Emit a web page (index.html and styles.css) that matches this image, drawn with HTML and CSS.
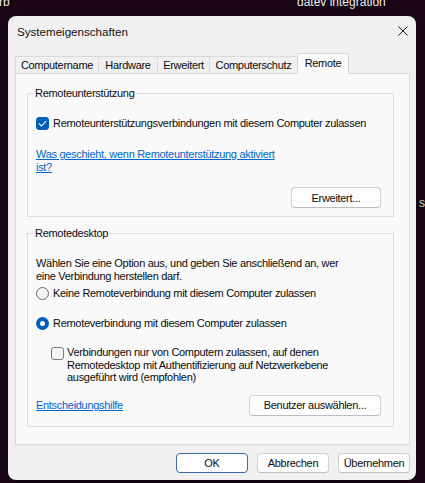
FILE: index.html
```html
<!DOCTYPE html>
<html lang="de">
<head>
<meta charset="utf-8">
<title>Systemeigenschaften</title>
<link rel="stylesheet" href="styles.css">
</head>
<body>
<div class="desk-label desk-rb">rb</div>
<div class="desk-label desk-datev">datev integration</div>
<div class="desk-label desk-ss">ss</div>

<div class="dialog">
  <div class="titlebar">
    <span class="title">Systemeigenschaften</span>
    <svg class="close" width="10" height="10" viewBox="0 0 10 10"><path d="M0.5 0.5 L9.5 9.5 M9.5 0.5 L0.5 9.5" stroke="#1b1b1b" stroke-width="1" fill="none"/></svg>
  </div>

  <div class="tabs">
    <div class="tab t1">Computername</div>
    <div class="tab t2">Hardware</div>
    <div class="tab t3">Erweitert</div>
    <div class="tab t4">Computerschutz</div>
    <div class="tab t5 active">Remote</div>
  </div>

  <div class="panel">
    <fieldset class="group g1">
      <legend>Remoteunterstützung</legend>
      <div class="option opt-assist">
        <span class="check checked"><svg width="13" height="13" viewBox="0 0 13 13"><path d="M3.3 6.9 L5.5 9 L9.7 4.4" stroke="#fff" stroke-width="1.1" fill="none" stroke-linecap="round" stroke-linejoin="round"/></svg></span>
        <span class="label">Remoteunterstützungsverbindungen mit diesem Computer zulassen</span>
      </div>
      <a class="link link-assist" href="#">Was geschieht, wenn Remoteunterstützung aktiviert<br>ist?</a>
      <div class="btn-row">
        <button class="btn btn-adv">Erweitert...</button>
      </div>
    </fieldset>

    <fieldset class="group g2">
      <legend>Remotedesktop</legend>
      <p class="intro">Wählen Sie eine Option aus, und geben Sie anschließend an, wer<br>eine Verbindung herstellen darf.</p>
      <div class="option opt-none">
        <span class="radio"></span>
        <span class="label">Keine Remoteverbindung mit diesem Computer zulassen</span>
      </div>
      <div class="option opt-allow">
        <span class="radio selected"></span>
        <span class="label">Remoteverbindung mit diesem Computer zulassen</span>
      </div>
      <div class="option opt-nla">
        <span class="check"></span>
        <span class="label multi">Verbindungen nur von Computern zulassen, auf denen<br>Remotedesktop mit Authentifizierung auf Netzwerkebene<br>ausgeführt wird (empfohlen)</span>
      </div>
      <div class="row-end">
        <a class="link" href="#">Entscheidungshilfe</a>
        <button class="btn btn-users">Benutzer auswählen...</button>
      </div>
    </fieldset>
  </div>

  <div class="footer">
    <button class="btn btn-ok">OK</button>
    <button class="btn">Abbrechen</button>
    <button class="btn">Übernehmen</button>
  </div>
</div>
</body>
</html>
```

FILE: styles.css
```css
html, body {
  margin: 0;
  padding: 0;
}
body {
  width: 425px;
  height: 483px;
  overflow: hidden;
  position: relative;
  background: #1b0716;
  font-family: "Liberation Sans", Arial, sans-serif;
  font-size: 11px;
  letter-spacing: -0.3px;
  color: #0c0c0c;
}

.desk-label {
  position: absolute;
  color: #f4f0f4;
  font-size: 12px;
  letter-spacing: 0;
  line-height: 15px;
  white-space: nowrap;
  text-shadow: 0 1px 2px rgba(0,0,0,0.8);
}
.desk-rb { left: -1px; top: -5px; }
.desk-datev { left: 297px; top: -5px; }
.desk-ss { left: 419px; top: 196px; }

.dialog {
  position: absolute;
  left: 8px;
  top: 16px;
  width: 408px;
  height: 464px;
  background: #f0f0f0;
  border-radius: 8px;
  overflow: hidden;
  box-shadow: 0 6px 20px rgba(0,0,0,0.5);
}

.titlebar {
  height: 37px;
  box-sizing: border-box;
  padding: 8px 8px 0 9px;
  display: flex;
  justify-content: space-between;
  align-items: flex-start;
}
.title {
  font-size: 11.6px;
  letter-spacing: 0;
  line-height: 15px;
  color: #111111;
}
.close {
  margin-top: 2px;
}

.tabs {
  display: flex;
  align-items: flex-end;
  height: 20px;
  margin-left: 7px;
  position: relative;
  z-index: 1;
}
.tab {
  box-sizing: border-box;
  height: 17px;
  line-height: 14px;
  padding-top: 1px;
  text-align: center;
  border: 1px solid #d9d9d9;
  border-bottom: none;
  margin-right: -1px;
  background: #f0f0f0;
  color: #0c0c0c;
  white-space: nowrap;
}
.t1 { width: 84px; }
.t2 { width: 60px; }
.t3 { width: 53px; }
.t4 { width: 89px; }
.t5 { width: 52px; }
.tab.active {
  height: 21px;
  margin-bottom: -1px;
  padding-top: 2px;
  background: #f9f9f9;
  position: relative;
}

.panel {
  width: 395px;
  box-sizing: border-box;
  margin-left: 7px;
  border: 1px solid #d9d9d9;
  background: #f9f9f9;
  padding: 12px 15px 17px 11px;
}

.group {
  margin: 0;
  border: 1px solid #dcdcdc;
  padding: 0 12px 8px 8px;
  min-inline-size: 0;
}
.group legend {
  padding: 0 2px;
  margin-left: -3px;
  line-height: 14px;
  color: #0c0c0c;
}
.g2 {
  margin-top: 9px;
  padding-bottom: 10px;
}

.option {
  display: flex;
  align-items: center;
  line-height: 14px;
  white-space: nowrap;
}
.option .label {
  margin-left: 4px;
}
.opt-assist { margin-top: 16px; }

.check {
  width: 13px;
  height: 13px;
  box-sizing: border-box;
  border: 1px solid #7a7a7a;
  border-radius: 3px;
  background: #f6f6f6;
  flex: none;
}
.check.checked {
  background: #005fb8;
  border-color: #005fb8;
}
.check.checked svg {
  display: block;
  margin: -1px;
}

.radio {
  width: 13px;
  height: 13px;
  box-sizing: border-box;
  border: 1px solid #6e6e6e;
  border-radius: 50%;
  background: #f4f4f4;
  flex: none;
}
.radio.selected {
  border: 4px solid #005fb8;
  background: #ffffff;
}

.link {
  color: #0066cc;
  text-decoration: underline;
  line-height: 12.5px;
  white-space: nowrap;
}
.link-assist {
  display: block;
  margin-top: 18px;
}

.btn-row {
  display: flex;
  justify-content: flex-end;
  margin-top: 14px;
}

.btn {
  font-family: inherit;
  font-size: 11px;
  letter-spacing: -0.3px;
  color: #0c0c0c;
  height: 21px;
  box-sizing: border-box;
  background: #fdfdfd;
  border: 1px solid #d0d0d0;
  border-bottom-color: #bdbdbd;
  border-radius: 4px;
  padding: 0;
  margin: 0;
  line-height: 14px;
  white-space: nowrap;
}
.btn-adv { width: 90px; }
.btn-users { width: 132px; }

.intro {
  margin: 17px 0 0 0;
  line-height: 12.5px;
  white-space: nowrap;
}
.opt-none { margin-top: 4px; }
.opt-allow { margin-top: 16px; }
.opt-nla {
  margin-top: 16px;
  margin-left: 15px;
  align-items: flex-start;
}
.opt-nla .check { margin-top: 1px; }
.label.multi {
  line-height: 12.5px;
  margin-left: 3px;
}

.row-end {
  display: flex;
  justify-content: space-between;
  align-items: center;
  margin-top: 11px;
}

.footer {
  display: flex;
  justify-content: flex-end;
  gap: 9px;
  margin-top: 8px;
  padding-right: 6px;
}
.footer .btn {
  width: 72px;
  height: 20px;
}
.footer .btn-ok {
  border-color: #3c6aa3;
}
```
